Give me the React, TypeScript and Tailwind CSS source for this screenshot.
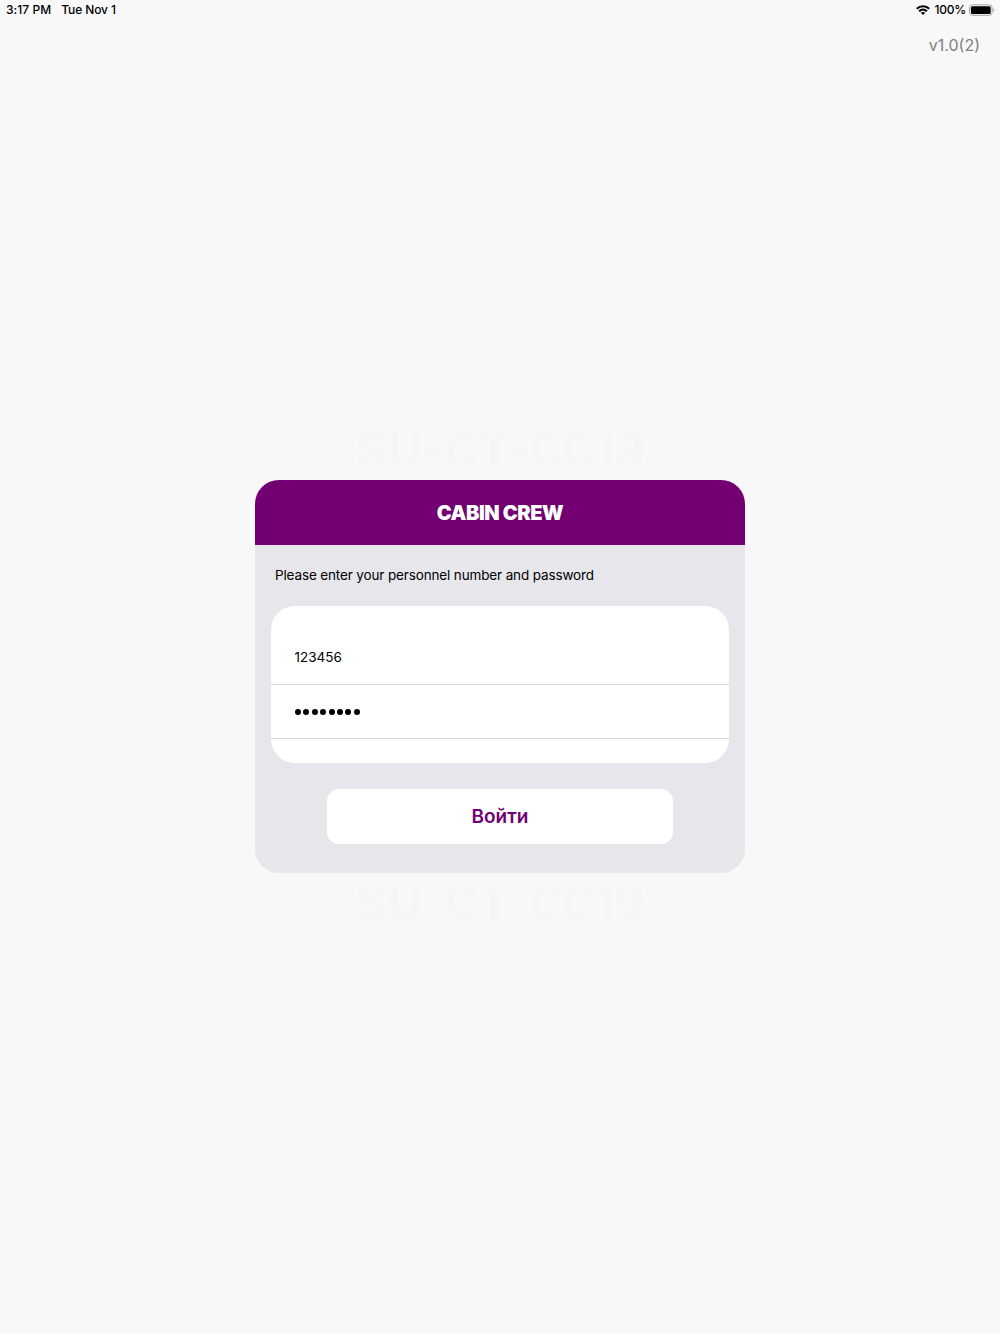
import React from "react";

function WifiIcon() {
  return (
    <svg className="h-[10px] w-[14px]" viewBox="0 0 14 10" fill="none" stroke="#000" strokeWidth="2.1">
      <path d="M0.8 3.7C4.2 0.4 9.8 0.4 13.2 3.7" />
      <path d="M3.1 6.2C5.3 4.1 8.7 4.1 10.9 6.2" />
      <path d="M4.8 7.8C6.1 6.6 7.9 6.6 9.2 7.8L7 10Z" fill="#000" stroke="none" />
    </svg>
  );
}

function BatteryIcon() {
  return (
    <svg className="h-3 w-[26px]" viewBox="0 0 26 12" fill="none">
      <rect x="0.5" y="0.9" width="22.6" height="10.4" rx="2.8" stroke="#a3a3a3" />
      <rect x="1.9" y="2.2" width="19.8" height="7.8" rx="1.5" fill="#000" />
      <path d="M24.2 4.3C25.7 4.9 25.7 7.3 24.2 7.9Z" fill="#a3a3a3" />
    </svg>
  );
}

function StatusBar() {
  return (
    <header className="flex h-5 items-center justify-between pl-[6px] pr-[5px] text-[12px] leading-5 font-medium text-black">
      <div className="flex gap-[10px]">
        <span className="tracking-[0.05px]">3:17 PM</span>
        <span className="-tracking-[0.1px]">Tue Nov 1</span>
      </div>
      <div className="flex items-center">
        <WifiIcon />
        <span className="ml-[5px] mr-[3px] -tracking-[0.25px]">100%</span>
        <BatteryIcon />
      </div>
    </header>
  );
}

function Watermark() {
  return (
    <div className="text-center text-[49px] leading-[60px] font-bold tracking-[-1px] whitespace-nowrap text-[#f6f6f6] select-none">
      SU-CT-0019
    </div>
  );
}

function LoginCard() {
  return (
    <section className="h-[392.5px] w-[490px] overflow-hidden rounded-[24px] bg-[#e7e6eb]">
      <div className="flex h-[64.5px] items-center justify-center bg-[#720072]">
        <h1 className="text-[20px] leading-6 font-black tracking-[-0.45px] text-white">CABIN CREW</h1>
      </div>
      <p className="mt-5 pl-5 text-[13.5px] leading-5 tracking-[-0.14px] text-black">
        Please enter your personnel number and password
      </p>
      <div className="ml-[15.5px] mt-[21.5px] h-[156.6px] w-[458.6px] overflow-hidden rounded-[24px] bg-white pt-6">
        <div className="flex h-[54.6px] items-center border-b border-[#d6d6d8] pl-6 text-[13.5px] text-black">
          123456
        </div>
        <div className="flex h-[54px] items-center gap-[2.4px] border-b border-[#d6d6d8] pl-[24.5px]">
          {Array.from({ length: 8 }, (_, i) => (
            <span key={i} className="size-[6px] rounded-full bg-black" />
          ))}
        </div>
      </div>
      <button className="mx-auto mt-[26px] flex h-[55px] w-[346px] items-center justify-center rounded-[12px] bg-white pt-px text-[19px] font-semibold text-[#720072]">
        Войти
      </button>
    </section>
  );
}

export default function App() {
  return (
    <div className="flex h-[1334px] w-full flex-col bg-[#f8f8f8] font-[Inter,sans-serif]">
      <StatusBar />
      <div className="flex h-[50px] items-center justify-end pr-5 text-[16px] text-[#808080]">v1.0(2)</div>
      <main className="flex flex-col items-center pt-[351px]">
        <Watermark />
        <div className="-mt-[0.6px]">
          <LoginCard />
        </div>
        <Watermark />
      </main>
    </div>
  );
}
